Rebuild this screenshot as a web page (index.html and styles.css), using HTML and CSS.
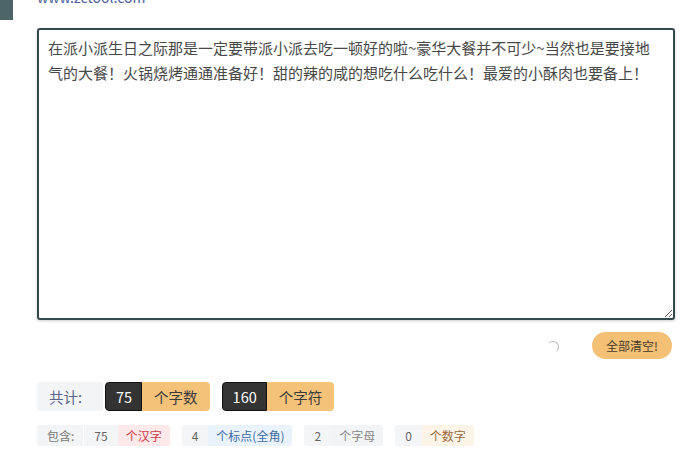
FILE: index.html
```html
<!DOCTYPE html>
<html lang="zh-CN">
<head>
    <meta charset="UTF-8">
    <meta name="viewport" content="width=device-width, initial-scale=1.0">
    <title>字数统计</title>
    <link rel="stylesheet" href="styles.css">
</head>
<body>
    <div class="top">
        <div class="side-tab"></div>
        <a class="site" href="#">www.zctool.com</a>
    </div>

    <div class="main">
        <textarea id="input" class="editor">在派小派生日之际那是一定要带派小派去吃一顿好的啦~豪华大餐并不可少~当然也是要接地气的大餐！火锅烧烤通通准备好！甜的辣的咸的想吃什么吃什么！最爱的小酥肉也要备上！</textarea>

        <div class="actions">
            <span class="spinner"></span>
            <button class="clear-btn">全部清空!</button>
        </div>

        <div class="totals">
            <span class="tag tag-label">共计:</span>
            <span class="pair">
                <span class="num">75</span><span class="unit">个字数</span>
            </span>
            <span class="pair">
                <span class="num">160</span><span class="unit">个字符</span>
            </span>
        </div>

        <div class="detail">
            <span class="chip">
                <span class="chip-label">包含:</span><span class="chip-num">75</span><span class="chip-unit red">个汉字</span>
            </span>
            <span class="chip">
                <span class="chip-num">4</span><span class="chip-unit blue">个标点(全角)</span>
            </span>
            <span class="chip">
                <span class="chip-num">2</span><span class="chip-unit grey">个字母</span>
            </span>
            <span class="chip">
                <span class="chip-num">0</span><span class="chip-unit brown">个数字</span>
            </span>
        </div>
    </div>
</body>
</html>
```

FILE: styles.css
```css
body { margin: 0; font-family: "Noto Sans CJK SC", "Noto Sans", sans-serif; background: #fff; color: #333; }

.top { display: flex; align-items: flex-end; margin-top: -12px; height: 32px; }
.side-tab { width: 13px; height: 32px; background: #4d6469; }
.site { margin-left: 24px; margin-bottom: 15px; font-size: 14px; color: #4a5c9c; text-decoration: none; line-height: 16px; }

.main { padding: 0 25px 0 37px; }

.editor {
    display: block;
    box-sizing: border-box;
    width: 638px;
    height: 292px;
    margin-top: 8px;
    padding: 5px 13px 5px 9px;
    border: 2px solid #34494e;
    border-radius: 3px;
    box-shadow: 0 1px 3px rgba(0,0,0,0.2);
    font-family: "Noto Sans CJK SC", sans-serif;
    font-size: 15px;
    line-height: 25px;
    color: #484848;
    resize: vertical;
    outline: none;
}

.actions { display: flex; justify-content: flex-end; align-items: center; margin-top: 12px; height: 27px; padding-right: 3px; }
.spinner {
    width: 10px; height: 10px;
    border: 1.5px solid transparent;
    border-top-color: #bbb; border-right-color: #bbb;
    border-radius: 50%;
    margin-right: 33px;
    margin-top: 3px;
}
.clear-btn {
    background: #f4c075;
    border: none;
    border-radius: 14px;
    height: 27px;
    padding: 0 14px;
    font-family: "Noto Sans CJK SC", sans-serif;
    font-size: 12px;
    color: #4a3b2a;
}

.totals { display: flex; gap: 12px; margin-top: 23px; height: 29px; font-size: 14.5px; }
.tag, .num, .unit { display: flex; align-items: center; height: 29px; box-sizing: border-box; }
.tag-label { background: #f3f4f6; color: #5b6489; padding: 0 12px; border-radius: 4px 0 0 4px; width: 66px; margin-right: -10px; }
.pair { display: flex; }
.num { background: #333; color: #fff; border: 1px solid #111; border-radius: 4px 0 0 4px; padding: 0 9px 0 10px; }
.unit { background: #f5c27a; color: #3a3a3a; padding: 0 12px; border-radius: 0 4px 4px 0; }

.detail { display: flex; gap: 12px; margin-top: 14px; font-size: 12px; }
.chip { display: flex; height: 21px; line-height: 21px; border-radius: 3px; overflow: hidden; }
.chip-label { background: #f3f4f6; color: #777; padding: 0 9px 0 10px; border-right: 1px solid #fff; }
.chip-num { background: #f4f5f7; color: #666; padding: 0 10px; }
.chip-unit { padding: 0 8px; }
.red { background: #fde8ea; color: #d2404e; }
.blue { background: #eaf2fb; color: #3d6ca8; }
.grey { background: #f3f4f6; color: #888; }
.brown { background: #fdf4e8; color: #9a6a3c; }
```
